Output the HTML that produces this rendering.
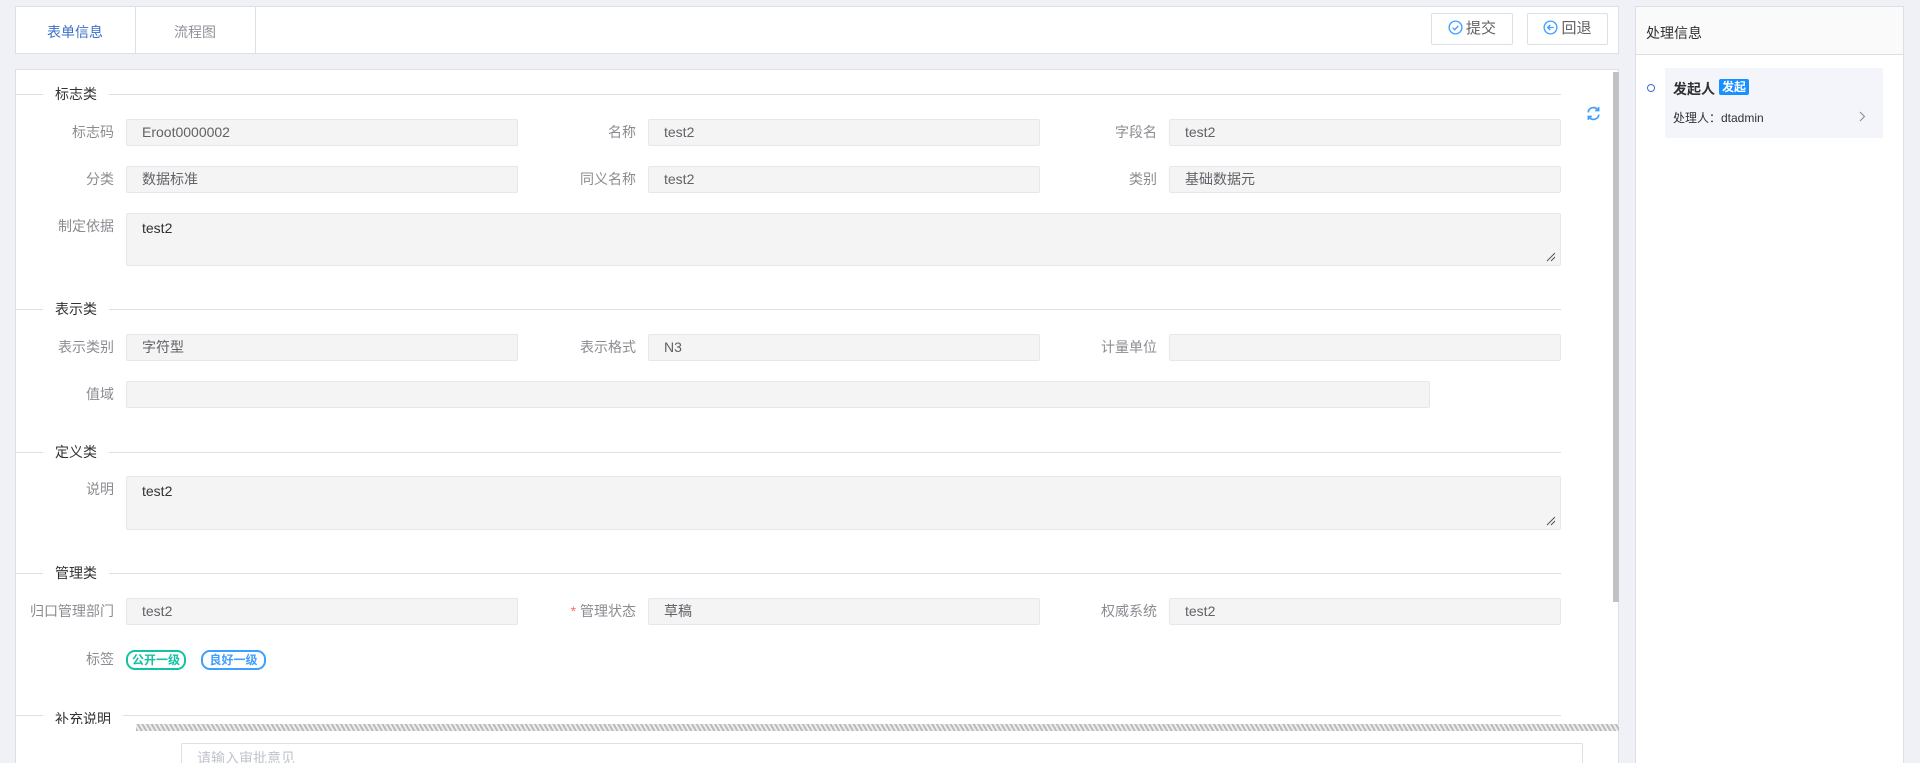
<!DOCTYPE html>
<html><head><meta charset="utf-8"><style>
*{box-sizing:border-box;margin:0;padding:0}
html,body{width:1920px;height:763px;overflow:hidden}
body{background:#eff1f6;font-family:"Liberation Sans","Noto Sans CJK SC",sans-serif;font-size:14px;color:#606266;position:relative}
.a{position:absolute}
.box{background:#fff;border:1px solid #dcdfe6}
.inp{position:absolute;background:#f4f4f5;border:1px solid #e4e7ed;border-radius:2px;height:27px;line-height:25px;padding-left:15px;color:#606266;font-size:14px}
.ta{position:absolute;background:#f4f4f5;border:1px solid #e4e7ed;border-radius:2px;padding:6px 15px;color:#303133;font-size:14px}
.lbl{position:absolute;text-align:right;width:110px;font-size:14px;color:#8a8c91;line-height:27px}
.sec{position:absolute;left:15px;width:1546px;height:1px;background:#dcdfe6}
.sect{position:absolute;background:#fff;padding:0 12px;font-size:14px;color:#303133;line-height:18px}
.btn{position:absolute;top:13px;height:32px;border:1px solid #dcdfe6;border-radius:2px;background:#fff;font-size:15px;color:#606266;line-height:30px;text-align:center}
.grip{position:absolute;width:10px;height:10px}
</style></head><body>
<div class="a box" style="left:15px;top:6px;width:1604px;height:48px"></div>
<div class="a" style="left:135px;top:7px;width:1px;height:46px;background:#dcdfe6"></div>
<div class="a" style="left:255px;top:7px;width:1px;height:46px;background:#dcdfe6"></div>
<div class="a" style="left:15px;top:22px;width:120px;text-align:center;color:#3a6fc9;font-size:14px">表单信息</div>
<div class="a" style="left:135px;top:22px;width:120px;text-align:center;color:#909399;font-size:14px">流程图</div>
<div class="btn" style="left:1431px;width:82px"><svg width="15" height="15" viewBox="0 0 16 16" style="vertical-align:-2px;margin-right:3px"><circle cx="8" cy="8" r="6.8" fill="none" stroke="#409eff" stroke-width="1.4"/><path d="M5 8.2l2.2 2.2L11 6.2" fill="none" stroke="#409eff" stroke-width="1.4"/></svg>提交</div>
<div class="btn" style="left:1527px;width:81px"><svg width="15" height="15" viewBox="0 0 16 16" style="vertical-align:-2px;margin-right:3px"><circle cx="8" cy="8" r="6.8" fill="none" stroke="#409eff" stroke-width="1.4"/><path d="M11.5 8H5M7.8 5.2L5 8l2.8 2.8" fill="none" stroke="#409eff" stroke-width="1.4"/></svg>回退</div>

<div class="a box" style="left:15px;top:69px;width:1604px;height:760px"></div>
<div class="a" style="left:1613px;top:72px;width:6px;height:530px;background:#c1c1c4"></div>
<svg class="a" style="left:1585px;top:105px" width="17" height="17" viewBox="0 0 16 16"><path d="M3 7a5 5 0 0 1 9-2.5M13 9a5 5 0 0 1-9 2.5" fill="none" stroke="#409eff" stroke-width="1.6"/><path d="M12.8 2v3.2H9.6M3.2 14v-3.2h3.2" fill="none" stroke="#409eff" stroke-width="1.6"/></svg>

<div class="sec" style="top:94px"></div><div class="sect" style="left:43px;top:85px">标志类</div>
<div class="lbl" style="left:4px;top:119px">标志码</div><div class="inp" style="left:126px;top:119px;width:392px">Eroot0000002</div>
<div class="lbl" style="left:526px;top:119px">名称</div><div class="inp" style="left:648px;top:119px;width:392px">test2</div>
<div class="lbl" style="left:1047px;top:119px">字段名</div><div class="inp" style="left:1169px;top:119px;width:392px">test2</div>
<div class="lbl" style="left:4px;top:166px">分类</div><div class="inp" style="left:126px;top:166px;width:392px">数据标准</div>
<div class="lbl" style="left:526px;top:166px">同义名称</div><div class="inp" style="left:648px;top:166px;width:392px">test2</div>
<div class="lbl" style="left:1047px;top:166px">类别</div><div class="inp" style="left:1169px;top:166px;width:392px">基础数据元</div>
<div class="lbl" style="left:4px;top:213px">制定依据</div><div class="ta" style="left:126px;top:213px;width:1435px;height:53px">test2</div>
<svg class="grip" style="left:1546px;top:252px" viewBox="0 0 10 10"><path d="M9 1L1 9M9 5L5 9" stroke="#555" stroke-width="1"/></svg>

<div class="sec" style="top:309px"></div><div class="sect" style="left:43px;top:300px">表示类</div>
<div class="lbl" style="left:4px;top:334px">表示类别</div><div class="inp" style="left:126px;top:334px;width:392px">字符型</div>
<div class="lbl" style="left:526px;top:334px">表示格式</div><div class="inp" style="left:648px;top:334px;width:392px">N3</div>
<div class="lbl" style="left:1047px;top:334px">计量单位</div><div class="inp" style="left:1169px;top:334px;width:392px"></div>
<div class="lbl" style="left:4px;top:381px">值域</div><div class="inp" style="left:126px;top:381px;width:1304px"></div>

<div class="sec" style="top:452px"></div><div class="sect" style="left:43px;top:443px">定义类</div>
<div class="lbl" style="left:4px;top:476px">说明</div><div class="ta" style="left:126px;top:476px;width:1435px;height:54px">test2</div>
<svg class="grip" style="left:1546px;top:516px" viewBox="0 0 10 10"><path d="M9 1L1 9M9 5L5 9" stroke="#555" stroke-width="1"/></svg>

<div class="sec" style="top:573px"></div><div class="sect" style="left:43px;top:564px">管理类</div>
<div class="lbl" style="left:4px;top:598px">归口管理部门</div><div class="inp" style="left:126px;top:598px;width:392px">test2</div>
<div class="lbl" style="left:526px;top:598px"><span style="color:#f56c6c">*</span> 管理状态</div><div class="inp" style="left:648px;top:598px;width:392px">草稿</div>
<div class="lbl" style="left:1047px;top:598px">权威系统</div><div class="inp" style="left:1169px;top:598px;width:392px">test2</div>
<div class="lbl" style="left:4px;top:646px">标签</div>
<div class="a" style="left:126px;top:650px;width:60px;height:20px;border:2px solid #13c2a3;border-radius:9px;color:#13c2a3;font-size:12px;font-weight:bold;text-align:center;line-height:16px">公开一级</div>
<div class="a" style="left:201px;top:650px;width:65px;height:20px;border:2px solid #409eff;border-radius:9px;color:#409eff;font-size:12px;font-weight:bold;text-align:center;line-height:16px">良好一级</div>

<div class="sec" style="top:715px"></div><div class="sect" style="left:43px;top:710px;height:14px;overflow:hidden">补充说明</div>
<div class="a" style="left:136px;top:724px;width:1483px;height:7px;background:repeating-linear-gradient(60deg,#bbb 0 2px,#eee 2px 4px)"></div>
<div class="a" style="left:181px;top:743px;width:1402px;height:30px;border:1px solid #dcdfe6;border-radius:2px;background:#fff;padding-left:15px;line-height:28px;color:#c0c4cc">请输入审批意见</div>

<div class="a box" style="left:1635px;top:6px;width:269px;height:800px"></div>
<div class="a" style="left:1636px;top:7px;width:267px;height:48px;background:#fafafa;border-bottom:1px solid #dcdfe6"></div>
<div class="a" style="left:1646px;top:23px;color:#303133;font-size:14px">处理信息</div>
<div class="a" style="left:1665px;top:68px;width:218px;height:70px;background:#f4f5fa"></div>
<div class="a" style="left:1647px;top:84px;width:8px;height:8px;border:1.5px solid #3a6fc9;border-radius:50%"></div>
<div class="a" style="left:1673px;top:79px;font-size:14px;font-weight:bold;color:#303133">发起人</div>
<div class="a" style="left:1719px;top:79px;height:16px;padding:0 3px;background:#1890ff;color:#fff;font-size:12px;font-weight:bold;line-height:16px;border-radius:2px">发起</div>
<div class="a" style="left:1673px;top:109px;font-size:12px;color:#303133">处理人：dtadmin</div>
<svg class="a" style="left:1859px;top:111px" width="7" height="11" viewBox="0 0 7 11"><path d="M1 1l4.5 4.5L1 10" fill="none" stroke="#888" stroke-width="1"/></svg>
</body></html>
